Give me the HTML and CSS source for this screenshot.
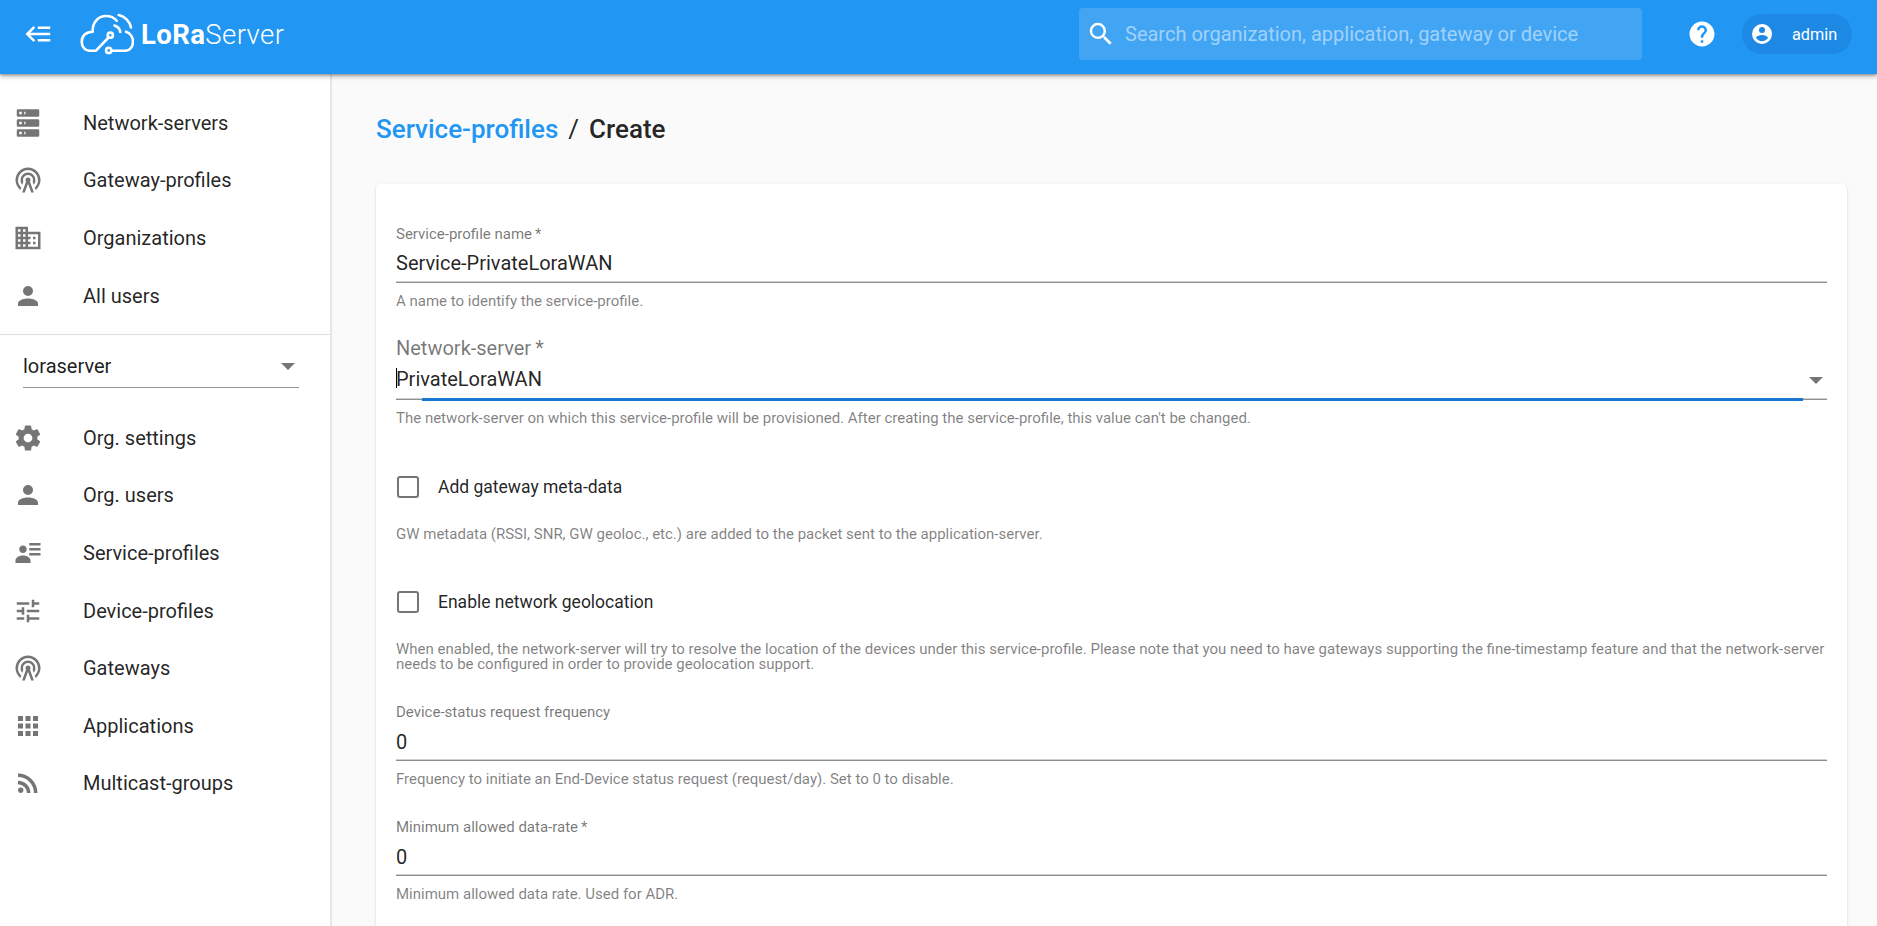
FILE: index.html
```html
<!DOCTYPE html>
<html lang="en">
<head>
<meta charset="utf-8">
<title>LoRa Server</title>
<link rel="stylesheet" href="styles.css">
</head>
<body>
<svg class="defs" aria-hidden="true">
  <symbol id="i-server" viewBox="0 0 24 24"><path d="M4,1H20A1,1 0 0,1 21,2V6A1,1 0 0,1 20,7H4A1,1 0 0,1 3,6V2A1,1 0 0,1 4,1M4,9H20A1,1 0 0,1 21,10V14A1,1 0 0,1 20,15H4A1,1 0 0,1 3,14V10A1,1 0 0,1 4,9M4,17H20A1,1 0 0,1 21,18V22A1,1 0 0,1 20,23H4A1,1 0 0,1 3,22V18A1,1 0 0,1 4,17M9,5H10V3H9V5M9,13H10V11H9V13M9,21H10V19H9V21M5,3V5H7V3H5M5,11V13H7V11H5M5,19V21H7V19H5Z"/></symbol>
  <symbol id="i-tower" viewBox="0 0 24 24"><path d="M12,10A2,2 0 0,1 14,12C14,12.5 13.82,12.94 13.53,13.29L16.7,22H14.57L12,14.93L9.43,22H7.3L10.47,13.29C10.18,12.94 10,12.5 10,12A2,2 0 0,1 12,10M12,8A4,4 0 0,0 8,12C8,12.5 8.1,13 8.28,13.46L7.4,15.86C6.53,14.81 6,13.47 6,12A6,6 0 0,1 12,6A6,6 0 0,1 18,12C18,13.47 17.47,14.81 16.6,15.86L15.72,13.46C15.9,13 16,12.5 16,12A4,4 0 0,0 12,8M12,4A8,8 0 0,0 4,12C4,14.36 5,16.5 6.64,17.94L5.92,19.94C3.54,18.11 2,15.23 2,12A10,10 0 0,1 12,2A10,10 0 0,1 22,12C22,15.23 20.46,18.11 18.08,19.94L17.36,17.94C19,16.5 20,14.36 20,12A8,8 0 0,0 12,4Z"/></symbol>
  <symbol id="i-domain" viewBox="0 0 24 24"><path d="M18,15H16V17H18M18,11H16V13H18M20,19H12V17H14V15H12V13H14V11H12V9H20M10,7H8V5H10M10,11H8V9H10M10,15H8V13H10M10,19H8V17H10M6,7H4V5H6M6,11H4V9H6M6,15H4V13H6M6,19H4V17H6M12,7V3H2V21H22V7H12Z"/></symbol>
  <symbol id="i-account" viewBox="0 0 24 24"><path d="M12,4A4,4 0 0,1 16,8A4,4 0 0,1 12,12A4,4 0 0,1 8,8A4,4 0 0,1 12,4M12,14C16.42,14 20,15.79 20,18V20H4V18C4,15.79 7.58,14 12,14Z"/></symbol>
  <symbol id="i-settings" viewBox="0 0 24 24"><path d="M12,15.5A3.5,3.5 0 0,1 8.5,12A3.5,3.5 0 0,1 12,8.5A3.5,3.5 0 0,1 15.5,12A3.5,3.5 0 0,1 12,15.5M19.43,12.97C19.47,12.65 19.5,12.33 19.5,12C19.5,11.67 19.47,11.34 19.43,11L21.54,9.37C21.73,9.22 21.78,8.95 21.66,8.73L19.66,5.27C19.54,5.05 19.27,4.96 19.05,5.05L16.56,6.05C16.04,5.66 15.5,5.32 14.87,5.07L14.5,2.42C14.46,2.18 14.25,2 14,2H10C9.75,2 9.54,2.18 9.5,2.42L9.13,5.07C8.5,5.32 7.96,5.66 7.44,6.05L4.95,5.05C4.73,4.96 4.46,5.05 4.34,5.27L2.34,8.73C2.21,8.95 2.27,9.22 2.46,9.37L4.57,11C4.53,11.34 4.5,11.67 4.5,12C4.5,12.33 4.53,12.65 4.57,12.97L2.46,14.63C2.27,14.78 2.21,15.05 2.34,15.27L4.34,18.73C4.46,18.95 4.73,19.03 4.95,18.95L7.44,17.94C7.96,18.34 8.5,18.68 9.13,18.93L9.5,21.58C9.54,21.82 9.75,22 10,22H14C14.25,22 14.46,21.82 14.5,21.58L14.87,18.93C15.5,18.67 16.04,18.34 16.56,17.94L19.05,18.95C19.27,19.03 19.54,18.95 19.66,18.73L21.66,15.27C21.78,15.05 21.73,14.78 21.54,14.63L19.43,12.97Z"/></symbol>
  <symbol id="i-details" viewBox="0 0 24 24"><path d="M11,9C11,10.66 9.66,12 8,12C6.34,12 5,10.66 5,9C5,7.34 6.34,6 8,6C9.66,6 11,7.34 11,9M14,20H2V18C2,15.79 4.69,14 8,14C11.31,14 14,15.79 14,18M22,12V14H13V12M22,8V10H13V8M22,4V6H13V4Z"/></symbol>
  <symbol id="i-tune" viewBox="0 0 24 24"><path d="M3,17V19H9V17H3M3,5V7H13V5H3M13,21V19H21V17H13V15H11V21H13M7,9V11H3V13H7V15H9V9H7M21,13V11H11V13H21M15,9H17V7H21V5H17V3H15V9Z"/></symbol>
  <symbol id="i-apps" viewBox="0 0 24 24"><path d="M16,20H20V16H16M16,14H20V10H16M10,8H14V4H10M16,8H20V4H16M10,14H14V10H10M4,14H8V10H4M4,20H8V16H4M10,20H14V16H10M4,8H8V4H4V8Z"/></symbol>
  <symbol id="i-rss" viewBox="0 0 24 24"><path d="M6.18,15.64A2.18,2.18 0 0,1 8.36,17.82C8.36,19 7.38,20 6.18,20C5,20 4,19 4,17.82A2.18,2.18 0 0,1 6.18,15.64M4,4.44A15.56,15.56 0 0,1 19.56,20H16.73A12.73,12.73 0 0,0 4,7.27V4.44M4,10.1A9.9,9.9 0 0,1 13.9,20H11.07A7.07,7.07 0 0,0 4,12.93V10.1Z"/></symbol>
</svg>

<header class="topbar">
  <button class="menu-btn" type="button" aria-label="Toggle menu">
    <svg class="icon-back" viewBox="0 0 24 24"><path d="M5,13L9,17L7.6,18.42L1.18,12L7.6,5.58L9,7L5,11H21V13H5M21,6V8H11V6H21M21,16V18H11V16H21Z"/></svg>
  </button>
  <div class="logo">
    <svg class="logo-mark" viewBox="0 0 54 42" fill="none" stroke="#fff" stroke-width="2.6" stroke-linecap="round" stroke-linejoin="round">
      <path d="M28.5 24.5L16 37.7H9.5C5 37.7 1.7 33.5 1.7 28.7C1.7 23 6 18.7 12.7 18.7C12 10 18 3 26 3C30.5 3 34.5 5 36.7 7.7"/>
      <path d="M46 18.7C50 20 53 24 53 28.7C53 33.5 50 37.7 45 37.7H31.5"/>
      <circle cx="28.7" cy="37.4" r="2.6"/>
      <circle cx="30.3" cy="22.2" r="2.6"/>
      <path d="M34.5 12.5C37.5 13.5 39.8 15.8 40.3 19"/>
      <path d="M38.7 2C45 3.5 50 8.5 51 14.5"/>
    </svg>
    <span class="logo-text"><b>LoRa</b>Server</span>
  </div>
  <div class="search">
    <svg class="icon-search" viewBox="0 0 24 24"><path d="M9.5,3A6.5,6.5 0 0,1 16,9.5C16,11.11 15.41,12.59 14.44,13.73L14.71,14H15.5L20.5,19L19,20.5L14,15.5V14.71L13.73,14.44C12.59,15.41 11.11,16 9.5,16A6.5,6.5 0 0,1 3,9.5A6.5,6.5 0 0,1 9.5,3M9.5,5C7,5 5,7 5,9.5C5,12 7,14 9.5,14C12,14 14,12 14,9.5C14,7 12,5 9.5,5Z"/></svg>
    <span class="search-text">Search organization, application, gateway or device</span>
  </div>
  <svg class="icon-help" viewBox="0 0 24 24"><path d="M15.07,11.25L14.17,12.17C13.45,12.89 13,13.5 13,15H11V14.5C11,13.39 11.45,12.39 12.17,11.67L13.41,10.41C13.78,10.05 14,9.55 14,9C14,7.89 13.1,7 12,7A2,2 0 0,0 10,9H8A4,4 0 0,1 12,5A4,4 0 0,1 16,9C16,9.88 15.64,10.67 15.07,11.25M13,19H11V17H13M12,2A10,10 0 0,0 2,12A10,10 0 0,0 12,22A10,10 0 0,0 22,12C22,6.47 17.5,2 12,2Z"/></svg>
  <div class="chip">
    <svg class="icon-user" viewBox="0 0 24 24"><path d="M12,19.2C9.5,19.2 7.29,17.92 6,16C6.03,14 10,12.9 12,12.9C14,12.9 17.97,14 18,16C16.71,17.92 14.5,19.2 12,19.2M12,5A3,3 0 0,1 15,8A3,3 0 0,1 12,11A3,3 0 0,1 9,8A3,3 0 0,1 12,5M12,2A10,10 0 0,0 2,12A10,10 0 0,0 12,22A10,10 0 0,0 22,12C22,6.47 17.5,2 12,2Z"/></svg>
    <span>admin</span>
  </div>
</header>

<div class="layout">
  <nav class="sidebar">
    <ul class="nav-list">
      <li class="nav-item"><svg class="nav-icon"><use href="#i-server"/></svg>Network-servers</li>
      <li class="nav-item"><svg class="nav-icon"><use href="#i-tower"/></svg>Gateway-profiles</li>
      <li class="nav-item"><svg class="nav-icon"><use href="#i-domain"/></svg>Organizations</li>
      <li class="nav-item"><svg class="nav-icon"><use href="#i-account"/></svg>All users</li>
    </ul>
    <div class="divider"></div>
    <div class="org-select">
      <span>loraserver</span>
      <span class="caret"></span>
    </div>
    <ul class="nav-list">
      <li class="nav-item"><svg class="nav-icon"><use href="#i-settings"/></svg>Org. settings</li>
      <li class="nav-item"><svg class="nav-icon"><use href="#i-account"/></svg>Org. users</li>
      <li class="nav-item"><svg class="nav-icon"><use href="#i-details"/></svg>Service-profiles</li>
      <li class="nav-item"><svg class="nav-icon"><use href="#i-tune"/></svg>Device-profiles</li>
      <li class="nav-item"><svg class="nav-icon"><use href="#i-tower"/></svg>Gateways</li>
      <li class="nav-item"><svg class="nav-icon"><use href="#i-apps"/></svg>Applications</li>
      <li class="nav-item"><svg class="nav-icon"><use href="#i-rss"/></svg>Multicast-groups</li>
    </ul>
  </nav>

  <main class="content">
    <h1 class="crumbs"><a class="crumb-link">Service-profiles</a><span class="crumb-sep">/</span><span>Create</span></h1>
    <section class="card">
      <div class="field field-first">
        <div class="label">Service-profile name&thinsp;*</div>
        <div class="value">Service-PrivateLoraWAN</div>
        <div class="line"></div>
        <p class="help">A name to identify the service-profile.</p>
      </div>
      <div class="field field-select">
        <div class="label label-big">Network-server&thinsp;*</div>
        <div class="value value-select"><span class="text-caret"></span>PrivateLoraWAN<span class="caret caret-field"></span></div>
        <div class="line line-focus"><div class="line-blue"></div></div>
        <p class="help">The network-server on which this service-profile will be provisioned. After creating the service-profile, this value can't be changed.</p>
      </div>
      <div class="check check-first">
        <span class="box"></span><span>Add gateway meta-data</span>
      </div>
      <p class="help help-check">GW metadata (RSSI, SNR, GW geoloc., etc.) are added to the packet sent to the application-server.</p>
      <div class="check">
        <span class="box"></span><span>Enable network geolocation</span>
      </div>
      <p class="help help-check">When enabled, the network-server will try to resolve the location of the devices under this service-profile. Please note that you need to have gateways supporting the fine-timestamp feature and that the network-server needs to be configured in order to provide geolocation support.</p>
      <div class="field">
        <div class="label">Device-status request frequency</div>
        <div class="value">0</div>
        <div class="line"></div>
        <p class="help">Frequency to initiate an End-Device status request (request/day). Set to 0 to disable.</p>
      </div>
      <div class="field">
        <div class="label">Minimum allowed data-rate&thinsp;*</div>
        <div class="value">0</div>
        <div class="line"></div>
        <p class="help">Minimum allowed data rate. Used for ADR.</p>
      </div>
    </section>
  </main>
</div>
</body>
</html>
```

FILE: styles.css
```css
* { box-sizing: border-box; }
html, body { margin: 0; height: 100%; overflow: hidden; }
body { font-family: Roboto, "Liberation Sans", sans-serif; background: #fafafa; color: rgba(0,0,0,.87); }
.defs { display: none; }

.topbar { position: relative; z-index: 2; height: 74px; padding-bottom: 6px; background: #2196f3; display: flex; align-items: center; color: #fff; box-shadow: 0 2px 5px rgba(0,0,0,.35), 0 1px 2px rgba(0,0,0,.2); }
.menu-btn { width: 30px; height: 30px; margin-left: 23.5px; padding: 0; border: 0; background: none; display: flex; }
.icon-back { width: 30px; height: 30px; fill: #fff; }
.logo { display: flex; align-items: center; margin-left: 26.5px; }
.logo-mark { width: 54px; height: 42px; display: block; }
.logo-text { margin-left: 7px; font-size: 27.5px; font-weight: 300; letter-spacing: .4px; }
.logo-text b { font-weight: 700; }
.search { width: 563px; height: 52px; margin-left: auto; border-radius: 4px; background: rgba(255,255,255,.15); display: flex; align-items: center; padding-left: 7px; }
.icon-search { width: 30px; height: 30px; fill: #fff; }
.search-text { margin-left: 9px; font-size: 20px; color: rgba(255,255,255,.5); }
.icon-help { width: 30px; height: 30px; fill: #fff; margin-left: 45px; }
.chip { width: 110px; height: 40px; margin-left: 25px; margin-right: 25px; border-radius: 20px; background: #1e88e5; display: flex; align-items: center; padding-left: 8px; font-size: 16.25px; }
.icon-user { width: 24px; height: 24px; fill: #fff; }
.chip span { margin-left: 18px; }

.layout { display: flex; height: 852px; }
.sidebar { width: 332px; flex: none; background: #fff; border-right: 2px solid #e6e6e6; padding-top: 20px; font-size: 20px; }
.nav-list { list-style: none; margin: 0; padding: 0; }
.nav-item { height: 57.6px; display: flex; align-items: center; padding-left: 13px; color: rgba(0,0,0,.87); }
.nav-icon { width: 30px; height: 30px; fill: #757575; margin-right: 40px; flex: none; }
.divider { height: 1px; background: #e0e0e0; margin-top: 9.6px; }
.org-select { margin: 8px 31px 0 23px; height: 45px; padding: 3px 4px 0 0; border-bottom: 1px solid #949494; display: flex; align-items: center; justify-content: space-between; color: rgba(0,0,0,.9); }
.caret { width: 0; height: 0; border-left: 7px solid transparent; border-right: 7px solid transparent; border-top: 7px solid #757575; }
.org-select .caret { margin-top: 1px; }
.org-select + .nav-list { margin-top: 21px; }

.content { flex: 1; min-width: 0; padding: 0 30px 0 44px; }
.crumbs { margin: 0; height: 110px; display: flex; align-items: center; font-size: 26px; font-weight: 500; line-height: 1; color: rgba(0,0,0,.87); }
.crumb-link { color: #2196f3; }
.crumb-sep { margin: 0 10px; font-weight: 400; }
.card { background: #fff; border-radius: 5px; height: 760px; padding: 0 20px; box-shadow: 0 1px 3px rgba(0,0,0,.12), 0 1px 2px rgba(0,0,0,.06); overflow: hidden; }

.field { padding-top: 31px; }
.label { font-size: 15px; line-height: 18px; color: rgba(0,0,0,.54); }
.label-big { font-size: 20px; line-height: 24px; }
.value { font-size: 20px; line-height: 24px; margin-top: 9px; height: 29px; color: rgba(0,0,0,.87); }
.line { height: 2px; background: linear-gradient(#cfcfcf 50%, #8e8e8e 50%); }
.line-focus { position: relative; }
.line-blue { position: absolute; left: 26px; right: 24px; top: 0; height: 3px; background: #1976d2; }
.help { margin: 0; padding-top: 11px; font-size: 15px; line-height: 15px; color: rgba(0,0,0,.5); }
.field-first { padding-top: 41px; }
.field-first .value { margin-top: 8px; height: 30px; }
.field-select { padding-top: 27px; }
.value-select { position: relative; margin-top: 7px; height: 31px; }
.text-caret { position: absolute; left: 0; top: 1px; width: 1px; height: 20px; background: #000; }
.caret-field { position: absolute; right: 4px; top: 10px; }
.check { display: flex; align-items: center; font-size: 17.5px; height: 24px; margin-top: 48px; }
.check-first { margin-top: 49px; }
.box { width: 22px; height: 22px; margin-left: 1px; border: 2.5px solid #757575; border-radius: 3px; margin-right: 19px; flex: none; }
.help-check { padding-top: 28px; }
```
